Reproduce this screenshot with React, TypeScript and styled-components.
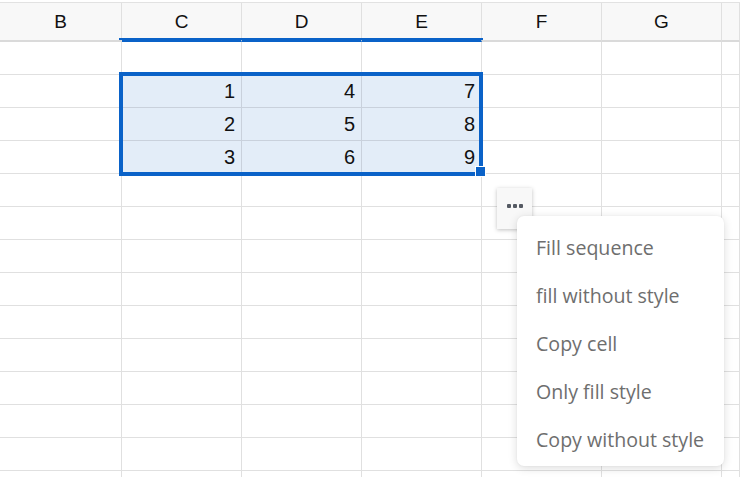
import React from "react";
import styled, { createGlobalStyle } from "styled-components";

const Global = createGlobalStyle`
  html, body { margin: 0; padding: 0; background: #fff; }
  body { width: 740px; height: 477px; overflow: hidden; }
`;

const Sheet = styled.div`
  position: relative;
  width: 740px;
  height: 477px;
  padding-top: 2px;
  box-sizing: border-box;
  overflow: hidden;
  font-family: "Liberation Sans", Arial, sans-serif;
`;

const Grid = styled.div`
  display: grid;
  grid-template-columns: 122px 120px 120px 120px 120px 120px 1fr;
  grid-auto-rows: 33px;
  grid-template-rows: 39px;
  border-top: 1px solid #e2e2e2;
`;

const HeaderCell = styled.div<{ $selected?: boolean }>`
  position: relative;
  box-sizing: border-box;
  display: flex;
  align-items: center;
  justify-content: center;
  background: #f8f8f8;
  border-right: 1px solid #e0e0e0;
  border-bottom: 2px solid ${(p) => (p.$selected ? "#0a62c8" : "#dadada")};
  font-size: 19px;
  color: #111;
  padding-top: 1px;
`;

const Cell = styled.div<{ $selected?: boolean }>`
  box-sizing: border-box;
  display: flex;
  align-items: center;
  justify-content: flex-end;
  padding-right: 6px;
  padding-top: 1px;
  border-right: 1px solid ${(p) => (p.$selected ? "#c9d1dc" : "#e0e0e0")};
  border-bottom: 1px solid ${(p) => (p.$selected ? "#c9d1dc" : "#e0e0e0")};
  background: ${(p) => (p.$selected ? "#e3edf8" : "#fff")};
  font-size: 20px;
  color: #111;
`;

const SelectionFrame = styled.div`
  position: absolute;
  left: 119px;
  top: 72px;
  width: 364px;
  height: 104px;
  box-sizing: border-box;
  border: 4px solid #0a62c8;
  pointer-events: none;
`;

const HeaderMark = styled.div`
  position: absolute;
  left: 119px;
  top: 38px;
  width: 364px;
  height: 2px;
  background: #0a62c8;
`;

const FillHandle = styled.div`
  position: absolute;
  left: 476px;
  top: 167px;
  width: 9px;
  height: 9px;
  background: #0a62c8;
  border: 1px solid #fff;
  box-sizing: content-box;
  margin: -1px 0 0 -1px;
`;

const MoreButton = styled.div`
  position: absolute;
  left: 497px;
  top: 188px;
  width: 35px;
  height: 41px;
  box-sizing: border-box;
  background: #f8f8f8;
  box-shadow: 0 1px 4px rgba(0, 0, 0, 0.25);
  display: flex;
  justify-content: center;
  padding-top: 16px;
  gap: 2px;
`;

const Dot = styled.span`
  width: 4px;
  height: 4px;
  border-radius: 1px;
  background: #555a63;
`;

const Menu = styled.div`
  position: absolute;
  left: 517px;
  top: 216px;
  width: 207px;
  box-sizing: border-box;
  padding: 7px 0 3px;
  background: #fff;
  border-radius: 7px;
  box-shadow: 0 2px 10px rgba(0, 0, 0, 0.14), 0 0 2px rgba(0, 0, 0, 0.06);
  display: flex;
  flex-direction: column;
`;

const MenuItem = styled.div`
  height: 48px;
  display: flex;
  align-items: center;
  padding-left: 19px;
  font-family: "Open Sans", "Noto Sans", sans-serif;
  font-size: 19.6px;
  color: #6e6e6e;
  white-space: nowrap;
`;

const columns = ["B", "C", "D", "E", "F", "G", ""];
const data: Record<number, string[]> = {
  1: ["1", "4", "7"],
  2: ["2", "5", "8"],
  3: ["3", "6", "9"],
};
const menuItems = [
  "Fill sequence",
  "fill without style",
  "Copy cell",
  "Only fill style",
  "Copy without style",
];

export default function App() {
  const rows = Array.from({ length: 14 }, (_, i) => i);
  return (
    <Sheet>
      <Global />
      <Grid>
        {columns.map((c, i) => (
          <HeaderCell key={"h" + i} $selected={i >= 1 && i <= 3}>
            {c}
          </HeaderCell>
        ))}
        {rows.map((r) =>
          columns.map((_, ci) => {
            const sel = !!data[r] && ci >= 1 && ci <= 3;
            return (
              <Cell key={r + "-" + ci} $selected={sel}>
                {sel ? data[r][ci - 1] : ""}
              </Cell>
            );
          })
        )}
      </Grid>
      <HeaderMark />
      <SelectionFrame />
      <FillHandle />
      <MoreButton>
        <Dot />
        <Dot />
        <Dot />
      </MoreButton>
      <Menu>
        {menuItems.map((m) => (
          <MenuItem key={m}>{m}</MenuItem>
        ))}
      </Menu>
    </Sheet>
  );
}
